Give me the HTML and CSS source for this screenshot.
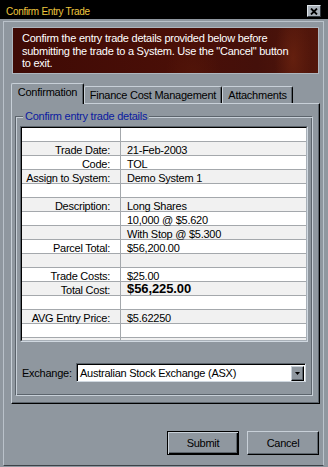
FILE: index.html
```html
<!DOCTYPE html>
<html lang="en">
<head>
<meta charset="UTF-8">
<title>Confirm Entry Trade</title>
<link rel="stylesheet" href="styles.css">
</head>
<body>
<div class="window">
  <div class="titlebar">
    <span class="title">Confirm Entry Trade</span>
    <div class="close_btn">
      <svg width="8" height="7" viewBox="0 0 8 7"><path d="M1 0.5 L7 6.5 M7 0.5 L1 6.5" stroke="#000" stroke-width="1.8" fill="none"/></svg>
    </div>
  </div>
  <div class="client">
    <div class="message">Confirm the entry trade details provided below before<br>submitting the trade to a System. Use the &quot;Cancel&quot; button<br>to exit.</div>

    <div class="tabs">
      <div class="tab active tab_conf">Confirmation</div>
      <div class="tab tab_fin">Finance Cost Management</div>
      <div class="tab tab_att">Attachments</div>
    </div>

    <div class="panel">
      <fieldset class="group">
        <legend class="group_label">Confirm entry trade details</legend>
        <div class="grid">
          <div class="grid_inner">
            <div class="row"><div class="label"></div><div class="value"></div></div>
            <div class="row"><div class="label">Trade Date:</div><div class="value">21-Feb-2003</div></div>
            <div class="row"><div class="label">Code:</div><div class="value">TOL</div></div>
            <div class="row"><div class="label">Assign to System:</div><div class="value">Demo System 1</div></div>
            <div class="row"><div class="label"></div><div class="value"></div></div>
            <div class="row"><div class="label">Description:</div><div class="value">Long Shares</div></div>
            <div class="row"><div class="label"></div><div class="value">10,000 @ $5.620</div></div>
            <div class="row"><div class="label"></div><div class="value">With Stop @ $5.300</div></div>
            <div class="row"><div class="label">Parcel Total:</div><div class="value">$56,200.00</div></div>
            <div class="row"><div class="label"></div><div class="value"></div></div>
            <div class="row"><div class="label">Trade Costs:</div><div class="value">$25.00</div></div>
            <div class="row"><div class="label">Total Cost:</div><div class="value total">$56,225.00</div></div>
            <div class="row"><div class="label"></div><div class="value"></div></div>
            <div class="row"><div class="label">AVG Entry Price:</div><div class="value">$5.62250</div></div>
            <div class="row"><div class="label"></div><div class="value"></div></div>
            <div class="row"><div class="label"></div><div class="value"></div></div>
          </div>
        </div>
        <div class="exchange">
          <span class="exchange_label">Exchange:</span>
          <div class="combo">
            <div class="combo_inner">
              <span class="combo_text">Australian Stock Exchange (ASX)</span>
              <div class="combo_btn">
                <svg width="5" height="3" viewBox="0 0 5 3"><path d="M0 0 H5 L2.5 3 Z" fill="#000"/></svg>
              </div>
            </div>
          </div>
        </div>
      </fieldset>
    </div>

    <div class="buttons">
      <button class="btn btn_default">Submit</button>
      <button class="btn">Cancel</button>
    </div>
  </div>
</div>
</body>
</html>
```

FILE: styles.css
```css
body, html {
  margin: 0;
}
body {
  font-family: "Liberation Sans", Arial, sans-serif;
  font-size: 11px;
  letter-spacing: -0.25px;
  color: #000;
  background: #8f979f;
}
.window {
  width: 328px;
  height: 467px;
  display: flex;
  flex-direction: column;
  background: #8f979f;
}
.titlebar {
  height: 19px;
  flex: none;
  background: #000;
  display: flex;
  justify-content: space-between;
  align-items: flex-start;
}
.title {
  color: #efc73e;
  font-size: 10px;
  line-height: 12px;
  letter-spacing: -0.3px;
  margin: 6px 0 0 6px;
}
.close_btn {
  width: 14px;
  height: 12px;
  box-sizing: border-box;
  margin: 5px 7px 0 0;
  background: #a9b1b9;
  border: 1px solid;
  border-color: #dfe5ea #30363c #30363c #dfe5ea;
  display: flex;
  align-items: center;
  justify-content: center;
}
.client {
  flex: 1;
  margin: 2px 4px 1px 3px;
  border: 1px solid #bac2ca;
  border-bottom-color: #3c4248;
  display: flex;
  flex-direction: column;
}
.message {
  height: 47px;
  box-sizing: border-box;
  margin: 5px 4px 0 8px;
  border: 1px solid #aeb6be;
  padding: 4px 0 0 9px;
  color: #fff;
  line-height: 12.7px;
  white-space: nowrap;
  background:
    radial-gradient(ellipse 26px 70px at 280px 30px, rgba(110, 36, 16, 0.7), transparent 70%),
    radial-gradient(ellipse 40px 60px at 180px 50px, rgba(90, 26, 10, 0.5), transparent 70%),
    linear-gradient(90deg, #3f0a05, #4a0f07 55%, #44100a 80%, #53170b);
}

/* tabs */
.tabs {
  display: flex;
  align-items: flex-end;
  height: 20px;
  margin: 9px 0 0 7px;
}
.tab {
  height: 17px;
  box-sizing: border-box;
  border: 1px solid #c8d0d8;
  border-bottom: none;
  border-right-color: #000;
  border-radius: 2px 2px 0 0;
  box-shadow: inset -1px 0 #5c646c;
  padding-top: 1px;
  line-height: 14px;
  text-align: center;
  white-space: nowrap;
}
.tab.active {
  height: 21px;
  margin-bottom: -1px;
  position: relative;
  z-index: 1;
  background: #8f979f;
}
.tab_conf {
  width: 73px;
}
.tab_fin {
  width: 138px;
}
.tab_att {
  width: 71px;
}
.panel {
  height: 301px;
  box-sizing: border-box;
  margin: 0 3px 0 7px;
  border: 1px solid #c8d0d8;
  border-right-color: #000;
  border-bottom-color: #000;
  box-shadow: inset -1px -1px #5c646c;
  padding: 6px 6px 0 3px;
}

/* group box */
.group {
  margin: 0;
  padding: 3px 4px 13px 4px;
  border: 1px solid;
  border-color: #5c646c #c8d0d8 #c8d0d8 #5c646c;
  box-shadow: inset 1px 1px #c8d0d8, inset -1px -1px #5c646c;
}
.group_label {
  margin-left: 3px;
  padding: 0 2px;
  line-height: 13px;
  color: #0a1aa0;
  background: #8f979f;
}
.grid {
  border: 1px solid;
  border-color: #5c646c #d0d8e0 #d0d8e0 #5c646c;
}
.grid_inner {
  height: 212px;
  overflow: hidden;
  border: 1px solid;
  border-color: #000 #a8b0b8 #a8b0b8 #000;
  background: #fff;
}
.row {
  display: flex;
  height: 14px;
  box-sizing: border-box;
  border-bottom: 1px solid #a4a8ac;
}
.row:nth-child(even) {
  background: #f1f1f1;
}
.label {
  width: 99px;
  flex: none;
  border-right: 1px solid #a4a8ac;
  padding: 2px 10px 0 0;
  box-sizing: border-box;
  line-height: 12px;
  text-align: right;
  white-space: nowrap;
}
.value {
  flex: 1;
  padding: 2px 0 0 6px;
  line-height: 12px;
  white-space: nowrap;
}
.value.total {
  font-size: 13px;
  font-weight: bold;
  letter-spacing: -0.1px;
  padding-top: 1px;
}

/* exchange combo */
.exchange {
  display: flex;
  align-items: center;
  height: 19px;
  margin: 21px 2px 0 2px;
}
.exchange_label {
  width: 54px;
  flex: none;
}
.combo {
  flex: 1;
  height: 19px;
  box-sizing: border-box;
  border: 1px solid;
  border-color: #5c646c #d0d8e0 #d0d8e0 #5c646c;
  display: flex;
}
.combo_inner {
  flex: 1;
  display: flex;
  align-items: center;
  border-top: 1px solid #000;
  border-left: 1px solid #000;
  background: #fff;
  padding-left: 2px;
}
.combo_text {
  flex: 1;
  white-space: nowrap;
}
.combo_btn {
  width: 13px;
  height: 15px;
  box-sizing: border-box;
  margin-right: 1px;
  background: #8f979f;
  border: 1px solid;
  border-color: #c8d0d8 #000 #000 #c8d0d8;
  box-shadow: inset -1px -1px #5c646c;
  display: flex;
  align-items: center;
  justify-content: center;
}

/* buttons */
.buttons {
  display: flex;
  justify-content: flex-end;
  gap: 8px;
  margin: 27px 4px 0 0;
}
.btn {
  width: 72px;
  height: 24px;
  box-sizing: border-box;
  padding: 0;
  font: inherit;
  letter-spacing: inherit;
  line-height: 22px;
  color: #000;
  background: #8f979f;
  border: 1px solid;
  border-color: #c8d0d8 #000 #000 #c8d0d8;
  box-shadow: inset -1px -1px #5c646c;
}
.btn_default {
  border-color: #000;
  box-shadow: inset 1px 1px #c8d0d8, inset -1px -1px #000, inset -2px -2px #5c646c;
}
```
